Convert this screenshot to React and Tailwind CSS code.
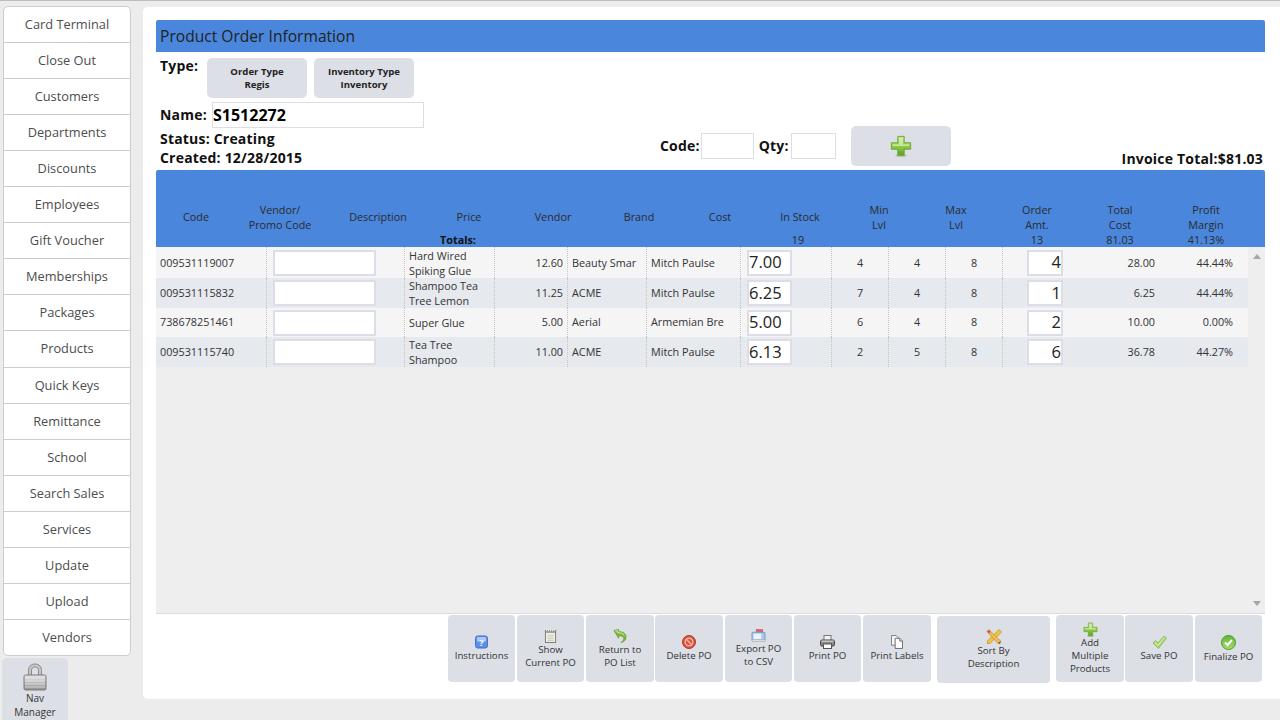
import React from "react";

const navItems = ["Card Terminal", "Close Out", "Customers", "Departments", "Discounts", "Employees", "Gift Voucher", "Memberships", "Packages", "Products", "Quick Keys", "Remittance", "School", "Search Sales", "Services", "Update", "Upload", "Vendors"];

const rows = [
  { code: "009531119007", desc: ["Hard Wired", "Spiking Glue"], price: "12.60", vendor: "Beauty Smar", brand: "Mitch Paulse", cost: "7.00", stock: 4, min: 4, max: 8, amt: 4, total: "28.00", margin: "44.44%", h: "h-[31px]", bg: "bg-[#f5f5f5]", pad: "pt-[1px]" },
  { code: "009531115832", desc: ["Shampoo Tea", "Tree Lemon"], price: "11.25", vendor: "ACME", brand: "Mitch Paulse", cost: "6.25", stock: 7, min: 4, max: 8, amt: 1, total: "6.25", margin: "44.44%", h: "h-[30px]", bg: "bg-[#e6e9ee]", pad: "" },
  { code: "738678251461", desc: ["Super Glue"], price: "5.00", vendor: "Aerial", brand: "Armemian Bre", cost: "5.00", stock: 6, min: 4, max: 8, amt: 2, total: "10.00", margin: "0.00%", h: "h-[29px]", bg: "bg-[#f5f5f5]", pad: "" },
  { code: "009531115740", desc: ["Tea Tree", "Shampoo"], price: "11.00", vendor: "ACME", brand: "Mitch Paulse", cost: "6.13", stock: 2, min: 5, max: 8, amt: 6, total: "36.78", margin: "44.27%", h: "h-[30px]", bg: "bg-[#e6e9ee]", pad: "" },
];

function PlusIcon({ className }) {
  return (
    <svg viewBox="0 0 24 24" className={className}>
      <defs>
        <linearGradient id="plusG" x1="0" y1="0" x2="0" y2="1">
          <stop offset="0" stopColor="#c3e68c" />
          <stop offset="0.55" stopColor="#8cc84a" />
          <stop offset="1" stopColor="#5aa31c" />
        </linearGradient>
      </defs>
      <ellipse cx="12" cy="22.5" rx="6" ry="1.2" fill="#8a9a80" opacity="0.6" />
      <path d="M8.5 1.5h7v7h7v7h-7v6.500h-7v-6.500h-7v-7h7z" fill="url(#plusG)" stroke="#6aa32e" strokeWidth="1" />
      <path d="M10 3h4v7h7v2H3v-2h7z" fill="#e6f6c8" opacity="0.6" />
    </svg>
  );
}

function HelpIcon() {
  return (
    <svg viewBox="0 0 14 14" className="w-[13px] h-[14px]">
      <rect x="0.500" y="0.500" width="13" height="13" rx="2.500" fill="#5b8fe8" stroke="#3c6cc4" />
      <rect x="2" y="1.500" width="10" height="5" rx="1.500" fill="#a9c8f7" />
      <text x="7" y="11" textAnchor="middle" fontSize="10" fontWeight="700" fill="#fff" fontFamily="Open Sans">?</text>
    </svg>
  );
}

function NotesIcon() {
  return (
    <svg viewBox="0 0 14 15" className="w-[13px] h-[14px]">
      <rect x="1.500" y="1.500" width="11" height="13" fill="#f2f0e6" stroke="#77776f" />
      <rect x="1.500" y="1.500" width="11" height="2.500" fill="#8d8d88" />
      <path d="M3 0.500v2M5 0.500v2M7 0.500v2M9 0.500v2M11 0.500v2" stroke="#fff" />
      <path d="M3.500 6.500h7M3.500 8.500h7M3.500 10.500h7M3.500 12.500h7" stroke="#c9c9c0" />
    </svg>
  );
}

function ReturnIcon() {
  return (
    <svg viewBox="0 0 15 15" className="w-[14px] h-[14px]">
      <path d="M1 1.500l5-1v2.500c4-.5 8 1.500 8 5.500 0 3.500-2.500 5.500-5.500 6 1.500-1 3-2.500 3-4.500 0-2-2-3-5.500-2.500V10z" fill="#7dba3e" stroke="#4f8f1d" strokeWidth="0.600" />
      <path d="M2.500 2.300l2.500-.5v2.200c3-.3 6 .5 7 3" stroke="#d6efb0" fill="none" />
    </svg>
  );
}

function DeleteIcon() {
  return (
    <svg viewBox="0 0 14 14" className="w-[14px] h-[14px]">
      <circle cx="7" cy="7" r="6.500" fill="#d9533f" stroke="#b5392a" />
      <circle cx="7" cy="7" r="3.800" fill="none" stroke="#f5b3a6" strokeWidth="1.400" />
      <path d="M4.300 4.300l5.400 5.400" stroke="#f5b3a6" strokeWidth="1.400" />
    </svg>
  );
}

function ExportIcon() {
  return (
    <svg viewBox="0 0 15 14" className="w-[15px] h-[13px]">
      <rect x="5" y="0.500" width="7" height="6" fill="#e8606a" stroke="#b54650" strokeWidth="0.500" />
      <rect x="0.500" y="3.500" width="14" height="9" rx="1" fill="#a9c6ec" stroke="#6f93c4" />
      <rect x="2" y="5" width="8.500" height="6" fill="#eaf2fb" />
      <rect x="0.500" y="11.500" width="14" height="2" fill="#d9dde3" stroke="#9aa0aa" strokeWidth="0.500" />
    </svg>
  );
}

function PrinterIcon() {
  return (
    <svg viewBox="0 0 15 14" className="w-[15px] h-[14px]">
      <rect x="4" y="0.500" width="7" height="5" fill="#f4f4f4" stroke="#777" />
      <rect x="0.500" y="5" width="14" height="6" rx="1.500" fill="#8a8a8a" stroke="#444" />
      <rect x="1.500" y="5.500" width="12" height="1.500" fill="#c8c8c8" />
      <rect x="3.500" y="9" width="8" height="4.500" fill="#fff" stroke="#555" />
    </svg>
  );
}

function LabelsIcon() {
  return (
    <svg viewBox="0 0 13 15" className="w-[12px] h-[14px]">
      <path d="M0.500 0.500h5l2.500 2.500v8h-7.500z" fill="#f6f6f6" stroke="#777" />
      <path d="M4.500 3.500h5l3 3v8h-8z" fill="#fff" stroke="#666" />
      <path d="M9.500 3.500v3h3" fill="#ddd" stroke="#666" />
    </svg>
  );
}

function SortIcon() {
  return (
    <svg viewBox="0 0 16 15" className="w-[16px] h-[15px]">
      <path d="M13 0.500l2.500 2.500L4 14.500H1.500V12z" fill="#f0c63e" stroke="#b68d1e" strokeWidth="0.700" />
      <path d="M1 2.500L2.800 0.700l12 11.500-.8 2.300-2.300-.3z" fill="#f3b95a" stroke="#c08a2c" strokeWidth="0.700" />
      <path d="M1 2.500L2.800 0.700l2 1.900L3 4.400z" fill="#d9534f" />
      <path d="M11.700 14.200l2.300.3.8-2.300z" fill="#555" />
    </svg>
  );
}

function CheckIcon() {
  return (
    <svg viewBox="0 0 15 14" className="w-[15px] h-[14px]">
      <path d="M1 8l2.500-2.500 2.500 2.500 6-7 2.500 2L6.500 13.500z" fill="#a8d96e" stroke="#7cb042" strokeWidth="0.700" />
      <path d="M3 7.500l3 2.800 6.500-8" stroke="#e4f5c6" fill="none" />
    </svg>
  );
}

function FinalizeIcon() {
  return (
    <svg viewBox="0 0 15 15" className="w-[15px] h-[15px]">
      <defs>
        <linearGradient id="finG" x1="0" y1="0" x2="0" y2="1">
          <stop offset="0" stopColor="#5cb83a" />
          <stop offset="1" stopColor="#a8dc6a" />
        </linearGradient>
      </defs>
      <circle cx="7.500" cy="7.500" r="7" fill="url(#finG)" stroke="#4f9a28" />
      <path d="M4 7.500l2.500 2.500L11 5" stroke="#fff" strokeWidth="2" fill="none" />
    </svg>
  );
}

function LockIcon() {
  return (
    <svg viewBox="0 0 24 28" className="w-[24px] h-[28px]">
      <defs>
        <linearGradient id="lockG" x1="0" y1="0" x2="0" y2="1">
          <stop offset="0" stopColor="#e6e6e6" />
          <stop offset="0.500" stopColor="#bdbdbd" />
          <stop offset="1" stopColor="#8f8f8f" />
        </linearGradient>
      </defs>
      <path d="M5.500 13V7.500C5.500 3.500 8 1 12 1s6.500 2.500 6.500 6.500V13h-3V7.500C15.500 5.200 14 4 12 4S8.500 5.200 8.500 7.500V13z" fill="#c6c6c6" stroke="#777" strokeWidth="0.800" />
      <rect x="1" y="12" width="22" height="15" rx="1.500" fill="url(#lockG)" stroke="#7a7a7a" />
      <path d="M2 15h20M2 18h20M2 21h20M2 24h20" stroke="#f3f3f3" strokeWidth="0.800" opacity="0.800" />
    </svg>
  );
}

const actions = [
  { label: ["Instructions"], icon: <HelpIcon />, cls: "w-[67px]" },
  { label: ["Show", "Current PO"], icon: <NotesIcon />, cls: "w-[67px] ml-[2px]" },
  { label: ["Return to", "PO List"], icon: <ReturnIcon />, cls: "w-[68px] ml-[2px]" },
  { label: ["Delete PO"], icon: <DeleteIcon />, cls: "w-[68px] ml-[1px]" },
  { label: ["Export PO", "to CSV"], icon: <ExportIcon />, cls: "w-[67px] ml-[2px]" },
  { label: ["Print PO"], icon: <PrinterIcon />, cls: "w-[67px] ml-[2px]" },
  { label: ["Print Labels"], icon: <LabelsIcon />, cls: "w-[68px] ml-[2px]" },
  { label: ["Sort By", "Description"], icon: <SortIcon />, cls: "w-[113px] ml-[6px] mt-[1px]" },
  { label: ["Add", "Multiple", "Products"], icon: <PlusIcon className="w-[15px] h-[15px] mb-[-1px]" />, cls: "w-[68px] ml-[6px]" },
  { label: ["Save PO"], icon: <CheckIcon />, cls: "w-[68px] ml-[1px]" },
  { label: ["Finalize PO"], icon: <FinalizeIcon />, cls: "w-[67px] ml-[2px]" },
];

const headers = [
  { w: "w-[80px]", l: ["Code"] },
  { w: "w-[88px]", l: ["Vendor/", "Promo Code"] },
  { w: "w-[108px]", l: ["Description"] },
  { w: "w-[74px]", l: ["Price"] },
  { w: "w-[94px]", l: ["Vendor"] },
  { w: "w-[78px]", l: ["Brand"] },
  { w: "w-[84px]", l: ["Cost"] },
  { w: "w-[76px]", l: ["In Stock"] },
  { w: "w-[82px]", l: ["Min", "Lvl"] },
  { w: "w-[72px]", l: ["Max", "Lvl"] },
  { w: "w-[90px]", l: ["Order", "Amt."] },
  { w: "w-[76px]", l: ["Total", "Cost"] },
  { w: "w-[96px]", l: ["Profit", "Margin"] },
];

const cell = "flex items-center border-r border-dotted border-[#c4c4c4] h-full";
const inputBox = "bg-white border-2 border-[#dcdde6] flex items-center";

function navHeight(name) {
  if (name === "Products") return "h-[37px]";
  if (name === "Vendors") return "h-[35px]";
  return "h-[36px] pt-[1px]";
}

export default function App() {
  return (
    <div className="w-[1280px] h-[720px] overflow-hidden flex bg-[#ececec] border-t border-[#bdbdbd] text-[#333] font-['Open_Sans',sans-serif]">
      <div className="w-[143px] shrink-0 flex flex-col pt-[5px]">
        <div className="ml-[3px] w-[128px] bg-white border border-[#cdcdcd] rounded-[5px] flex flex-col">
          {navItems.map((name, i) => (
            <div key={name} className={`flex items-center justify-center text-[12.8px] text-[#4d4d4d] border-[#cdcdcd] ${i < 17 ? "border-b" : ""} ${navHeight(name)}`}>
              {name}
            </div>
          ))}
        </div>
        <div className="ml-[2px] mt-[2px] w-[66px] h-[70px] bg-[#dcdfe6] rounded-t-[5px] flex flex-col items-center pt-[5px]">
          <LockIcon />
          <div className="text-[10px] leading-[14px] text-center">Nav<br />Manager</div>
        </div>
      </div>

      <div className="flex-1 mt-[6px] h-[692px] bg-white rounded-l-[5px] pl-[13px] pr-[15px] pt-[13px] flex flex-col">
        <div className="h-[32px] bg-[#4a86dc] rounded-t-[2px] flex items-center pl-[4px] pt-[1px] text-[15.6px] text-[#222]">Product Order Information</div>

        <div className="h-[118px] flex text-[14px] font-bold text-[#111] tracking-[0.2px]">
          <div className="w-[504px] shrink-0 pl-[4px] flex flex-col">
            <div className="flex pt-[6px]">
              <div className="w-[47px] leading-[16px]">Type:</div>
              <button className="w-[100px] h-[40px] bg-[#dcdfe6] rounded-[5px] text-[9.6px] leading-[13px] tracking-normal text-[#222]">Order Type<br />Regis</button>
              <button className="w-[100px] h-[40px] ml-[7px] bg-[#dcdfe6] rounded-[5px] text-[9.6px] leading-[13px] tracking-normal text-[#222]">Inventory Type<br />Inventory</button>
            </div>
            <div className="flex items-center mt-[4px]">
              <div className="w-[52px] mt-[-2px]">Name:</div>
              <div className="w-[212px] h-[26px] bg-white border border-[#dcdde6] flex items-center text-[16px] tracking-normal text-black">S1512272</div>
            </div>
            <div className="mt-[1px] leading-[19px]">Status: Creating</div>
            <div className="leading-[19px]">Created: 12/28/2015</div>
          </div>
          <div className="flex items-start">
            <div className="mt-[81px] flex items-center">
              <span className="mt-[-2px]">Code:</span>
              <div className="w-[53px] h-[26px] ml-[1px] bg-white border border-[#dcdde6]"></div>
              <span className="ml-[5px] mt-[-2px]">Qty:</span>
              <div className="w-[45px] h-[26px] ml-[2px] bg-white border border-[#dcdde6]"></div>
            </div>
            <div className="ml-[15px] mt-[74px] w-[100px] h-[40px] bg-[#dcdfe6] rounded-[5px] flex items-center justify-center">
              <PlusIcon className="w-[22px] h-[22px]" />
            </div>
          </div>
          <div className="ml-auto self-end pr-[2px] leading-[19px] pb-[2px]">Invoice Total:$81.03</div>
        </div>

        <div className="h-[77px] bg-[#4a86dc] rounded-t-[2px] pt-[32px] text-[10.8px] text-[#2b2b2b] shrink-0">
          <div className="flex h-[31px] items-start">
            {headers.map((h) => (
              <div key={h.l.join()} className={`${h.w} text-center leading-[15px] ${h.l.length === 1 ? "pt-[7px]" : ""}`}>
                {h.l.map((t) => <div key={t}>{t}</div>)}
              </div>
            ))}
          </div>
          <div className="flex h-[14px] leading-[14px] text-center">
            <div className="w-[262px]"></div>
            <div className="w-[80px] font-bold text-[#111]">Totals:</div>
            <div className="w-[264px]"></div>
            <div className="w-[76px] ml-[-2px]">19</div>
            <div className="w-[156px]"></div>
            <div className="w-[90px]">13</div>
            <div className="w-[76px]">81.03</div>
            <div className="w-[96px]">41.13%</div>
          </div>
        </div>

        <div className="h-[367px] bg-[#eeeeee] border-b border-[#dcdcdc] flex shrink-0 text-[10.8px] text-[#333]">
          <div className="w-[1092px]">
            {rows.map((r) => (
              <div key={r.code} className={`grid grid-cols-[111px_138px_90px_73px_79px_94px_91px_57px_57px_57px_62px_94px_89px] items-center ${r.h} ${r.bg}`}>
                <div className={`${cell} ${r.pad} pl-[4px]`}>{r.code}</div>
                <div className={`${cell} pl-[6px]`}>
                  <div className={`${inputBox} w-[103px] h-[26px]`}></div>
                </div>
                <div className={`${cell} pl-[4px]`}>
                  <div className="leading-[15px]">{r.desc.map((t) => <div key={t}>{t}</div>)}</div>
                </div>
                <div className={`${cell} ${r.pad} justify-end pr-[4px]`}>{r.price}</div>
                <div className={`${cell} ${r.pad} pl-[4px]`}>{r.vendor}</div>
                <div className={`${cell} ${r.pad} pl-[4px]`}>{r.brand}</div>
                <div className={`${cell} pl-[6px]`}>
                  <div className={`${inputBox} w-[45px] h-[26px] text-[16.5px] text-[#222]`}>{r.cost}</div>
                </div>
                <div className={`${cell} ${r.pad} justify-center`}>{r.stock}</div>
                <div className={`${cell} ${r.pad} justify-center`}>{r.min}</div>
                <div className={`${cell} ${r.pad} justify-center`}>{r.max}</div>
                <div className={`${cell} justify-end border-r-0 pr-[2px]`}>
                  <div className={`${inputBox} w-[36px] h-[26px] justify-end text-[16.5px] text-[#222]`}>{r.amt}</div>
                </div>
                <div className={`flex h-full items-center justify-end pr-[4px] ${r.pad}`}>{r.total}</div>
                <div className={`flex h-full items-center justify-end pr-[15px] ${r.pad}`}>{r.margin}</div>
              </div>
            ))}
          </div>
          <div className="flex-1 flex flex-col items-center justify-between py-[7px] text-[#a6a6a6]">
            <svg viewBox="0 0 8 5" className="w-[8px] h-[5px]"><path d="M4 0l4 5H0z" fill="currentColor" /></svg>
            <svg viewBox="0 0 8 5" className="w-[8px] h-[5px]"><path d="M4 5l4-5H0z" fill="currentColor" /></svg>
          </div>
        </div>

        <div className="flex pl-[292px] pt-[1px] items-start text-[9.7px] leading-[13px] text-[#333]">
          {actions.map((a) => (
            <div key={a.label.join()} className={`${a.cls} h-[67px] shrink-0 bg-[#dcdfe6] rounded-[4px] flex flex-col items-center justify-center text-center`}>
              {a.icon}
              {a.label.map((t) => <div key={t}>{t}</div>)}
            </div>
          ))}
        </div>
      </div>
    </div>
  );
}
